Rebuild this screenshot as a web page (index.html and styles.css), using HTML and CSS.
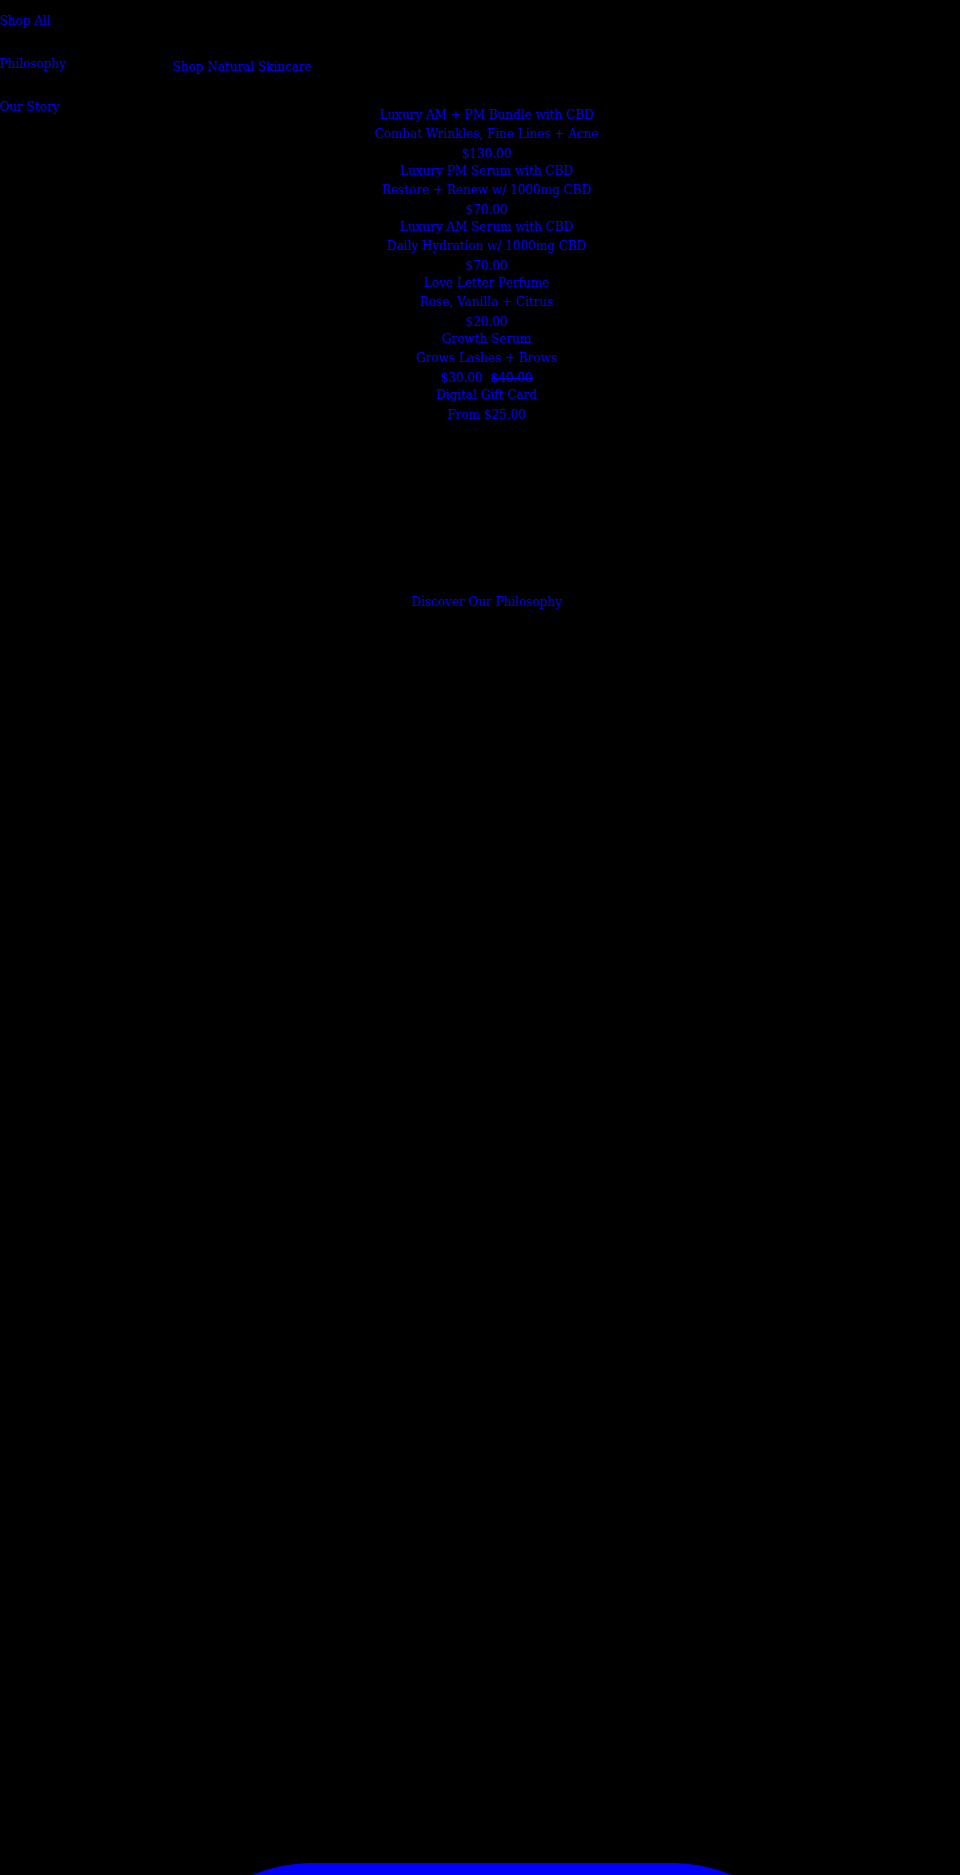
FILE: index.html
```html
<!DOCTYPE html>
<html lang="en">
<head>
<meta charset="utf-8">
<title>Shop Natural Skincare</title>
<link rel="stylesheet" href="styles.css">
</head>
<body>
<header class="site-header">
  <nav class="menu">
    <a class="menu-link" href="#">Shop All</a>
    <a class="menu-link" href="#">Philosophy</a>
    <a class="menu-link" href="#">Our Story</a>
  </nav>
  <a class="hero-link" href="#">Shop Natural Skincare</a>
</header>
<main class="content">
  <ul class="products">
    <li class="product">
      <a class="product-title" href="#">Luxury AM + PM Bundle with CBD</a>
      <a class="product-sub" href="#">Combat Wrinkles, Fine Lines + Acne</a>
      <a class="product-price" href="#">$130.00</a>
    </li>
    <li class="product">
      <a class="product-title" href="#">Luxury PM Serum with CBD</a>
      <a class="product-sub" href="#">Restore + Renew w/ 1000mg CBD</a>
      <a class="product-price" href="#">$70.00</a>
    </li>
    <li class="product">
      <a class="product-title" href="#">Luxury AM Serum with CBD</a>
      <a class="product-sub" href="#">Daily Hydration w/ 1000mg CBD</a>
      <a class="product-price" href="#">$70.00</a>
    </li>
    <li class="product">
      <a class="product-title" href="#">Love Letter Perfume</a>
      <a class="product-sub" href="#">Rose, Vanilla + Citrus</a>
      <a class="product-price" href="#">$20.00</a>
    </li>
    <li class="product">
      <a class="product-title" href="#">Growth Serum</a>
      <a class="product-sub" href="#">Grows Lashes + Brows</a>
      <a class="product-price" href="#"><span>$30.00</span><s class="was">$40.00</s></a>
    </li>
    <li class="product">
      <a class="product-title" href="#">Digital Gift Card</a>
      <a class="product-price product-price--solo" href="#">From $25.00</a>
    </li>
  </ul>
  <a class="philosophy-link" href="#">Discover Our Philosophy</a>
  <section class="gallery" aria-hidden="true"></section>
  <div class="cta-clip">
    <a class="cta" href="#" aria-label="Shop now"></a>
  </div>
</main>
</body>
</html>
```

FILE: styles.css
```css
html, body {
  margin: 0;
  padding: 0;
  background: #000;
}

body {
  font-family: "DejaVu Serif", serif;
  font-size: 12px;
  color: #000;
  height: 1875px;
  overflow: hidden;
}

a {
  color: #0000ee;
  text-decoration: none;
}

.site-header {
  display: flex;
  height: 107px;
}

.menu {
  flex: 0 0 173px;
  display: flex;
  flex-direction: column;
  gap: 25px;
  padding-top: 12px;
}

.menu-link {
  display: block;
  line-height: 18px;
}

.hero-link {
  display: block;
  line-height: 18px;
  padding-top: 58px;
  align-self: flex-start;
}

.content {
  padding-left: 14px;
  text-align: center;
}

.products {
  list-style: none;
  margin: 0;
  padding: 0;
}

.product {
  display: flex;
  flex-direction: column;
  align-items: center;
}

.product-title {
  line-height: 17px;
}

.product-sub {
  line-height: 21px;
}

.product-price {
  line-height: 18px;
  display: flex;
  gap: 8px;
}

.product-price--solo {
  margin-top: 2px;
}

.was {
  text-decoration: line-through;
}

.philosophy-link {
  display: block;
  line-height: 18px;
  margin-top: 169px;
}

.gallery {
  height: 1252px;
}

.cta-clip {
  height: 20px;
  overflow: hidden;
  margin-left: -14px;
}

.cta {
  display: block;
  width: 662px;
  height: 320px;
  margin-left: 161px;
  background: #0000f8;
  border-radius: 150px;
}
```
